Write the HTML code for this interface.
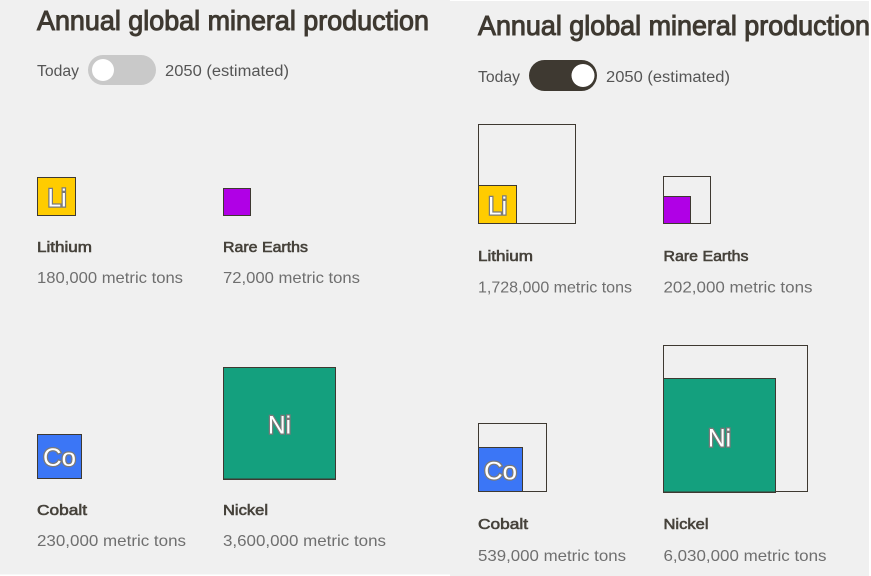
<!DOCTYPE html>
<html><head><meta charset="utf-8"><style>
html,body{margin:0;padding:0;background:#fff;width:871px;height:576px;overflow:hidden}
svg{display:block;font-family:"Liberation Sans",sans-serif}
.t{font-size:27.5px;fill:#3e3931;stroke:#3e3931;stroke-width:1}
.l{font-size:15.5px;fill:#555}
.n{font-size:15px;fill:#46423b;stroke:#46423b;stroke-width:.6}
.v{font-size:15.7px;fill:#6f6f6f}
.s{font-size:25px;fill:#fff;stroke:#7a7a7a;stroke-width:2.5;paint-order:stroke}
.o{fill:none;stroke:#3e3931;stroke-width:1}
.i{stroke:#3e3931;stroke-width:1}
</style></head><body>
<svg width="871" height="576" viewBox="0 0 871 576" xmlns="http://www.w3.org/2000/svg">
<rect x="0" y="0" width="450" height="574.5" fill="#f0f0f0"/>
<rect x="450" y="1" width="419" height="575" fill="#f0f0f0"/>

<text class="t" x="37" y="30" textLength="392" lengthAdjust="spacingAndGlyphs">Annual global mineral production</text>
<text class="l" x="37" y="76" textLength="42" lengthAdjust="spacingAndGlyphs">Today</text>
<rect x="88" y="55" width="68" height="30" rx="15" fill="#c9c9c9"/>
<circle cx="103" cy="70" r="11" fill="#fff"/>
<text class="l" x="165" y="76" textLength="124" lengthAdjust="spacingAndGlyphs">2050 (estimated)</text>

<rect class="i" x="37.5" y="177.5" width="38" height="38" fill="#ffcc00"/>
<text class="s" x="47.5" y="206.5" textLength="19" lengthAdjust="spacingAndGlyphs">Li</text>
<rect class="i" x="223.5" y="188.5" width="27" height="27" fill="#b000e6"/>
<text class="n" x="37" y="252" textLength="55" lengthAdjust="spacingAndGlyphs">Lithium</text>
<text class="v" x="37" y="283" textLength="146" lengthAdjust="spacingAndGlyphs">180,000 metric tons</text>
<text class="n" x="223" y="252" textLength="85" lengthAdjust="spacingAndGlyphs">Rare Earths</text>
<text class="v" x="223" y="283" textLength="137" lengthAdjust="spacingAndGlyphs">72,000 metric tons</text>

<rect class="i" x="37.5" y="434.5" width="44" height="44" fill="#3b76f6"/>
<text class="s" x="43" y="466" textLength="33" lengthAdjust="spacingAndGlyphs">Co</text>
<rect class="i" x="223.5" y="367.5" width="112" height="112" fill="#14a07e"/>
<rect x="224" y="478.5" width="112" height="1.5" fill="#3e3931"/>
<rect x="335" y="367" width="1" height="113" fill="#3e3931"/>
<text class="s" x="268" y="433.5" textLength="23" lengthAdjust="spacingAndGlyphs">Ni</text>
<text class="n" x="37" y="515" textLength="50" lengthAdjust="spacingAndGlyphs">Cobalt</text>
<text class="v" x="37" y="546" textLength="149" lengthAdjust="spacingAndGlyphs">230,000 metric tons</text>
<text class="n" x="223" y="515" textLength="45" lengthAdjust="spacingAndGlyphs">Nickel</text>
<text class="v" x="223" y="546" textLength="163" lengthAdjust="spacingAndGlyphs">3,600,000 metric tons</text>

<text class="t" x="478" y="35" textLength="392" lengthAdjust="spacingAndGlyphs">Annual global mineral production</text>
<rect x="869" y="0" width="2" height="576" fill="#fff"/>
<text class="l" x="478" y="82" textLength="42" lengthAdjust="spacingAndGlyphs">Today</text>
<rect x="529" y="60" width="68" height="31" rx="15.5" fill="#3e3931"/>
<circle cx="583" cy="75.5" r="11.5" fill="#fff"/>
<text class="l" x="606" y="82" textLength="124" lengthAdjust="spacingAndGlyphs">2050 (estimated)</text>

<rect class="o" x="478.5" y="124.5" width="97" height="99"/>
<rect class="i" x="478.5" y="185.5" width="38" height="38" fill="#ffcc00"/>
<text class="s" x="488" y="214.5" textLength="19" lengthAdjust="spacingAndGlyphs">Li</text>
<rect class="o" x="663.5" y="176.5" width="47" height="47"/>
<rect class="i" x="663.5" y="196.5" width="27" height="27" fill="#b000e6"/>
<text class="n" x="478" y="261" textLength="55" lengthAdjust="spacingAndGlyphs">Lithium</text>
<text class="v" x="478" y="292.5" textLength="154" lengthAdjust="spacingAndGlyphs">1,728,000 metric tons</text>
<text class="n" x="663.5" y="261" textLength="85" lengthAdjust="spacingAndGlyphs">Rare Earths</text>
<text class="v" x="663.5" y="292.5" textLength="149" lengthAdjust="spacingAndGlyphs">202,000 metric tons</text>

<rect class="o" x="478.5" y="423.5" width="68" height="68"/>
<rect class="i" x="478.5" y="447.5" width="44" height="44" fill="#3b76f6"/>
<text class="s" x="484" y="479.5" textLength="33" lengthAdjust="spacingAndGlyphs">Co</text>
<rect class="o" x="663.5" y="345.5" width="144" height="146"/>
<rect class="i" x="663.5" y="378.5" width="112" height="113.5" fill="#14a07e"/>
<rect x="663" y="491.5" width="113" height="1.5" fill="#3e3931"/>
<text class="s" x="708" y="446.5" textLength="23" lengthAdjust="spacingAndGlyphs">Ni</text>
<text class="n" x="478" y="529" textLength="50" lengthAdjust="spacingAndGlyphs">Cobalt</text>
<text class="v" x="478" y="561" textLength="148" lengthAdjust="spacingAndGlyphs">539,000 metric tons</text>
<text class="n" x="663.5" y="529" textLength="45" lengthAdjust="spacingAndGlyphs">Nickel</text>
<text class="v" x="663.5" y="561" textLength="163" lengthAdjust="spacingAndGlyphs">6,030,000 metric tons</text>
</svg>
</body></html>
